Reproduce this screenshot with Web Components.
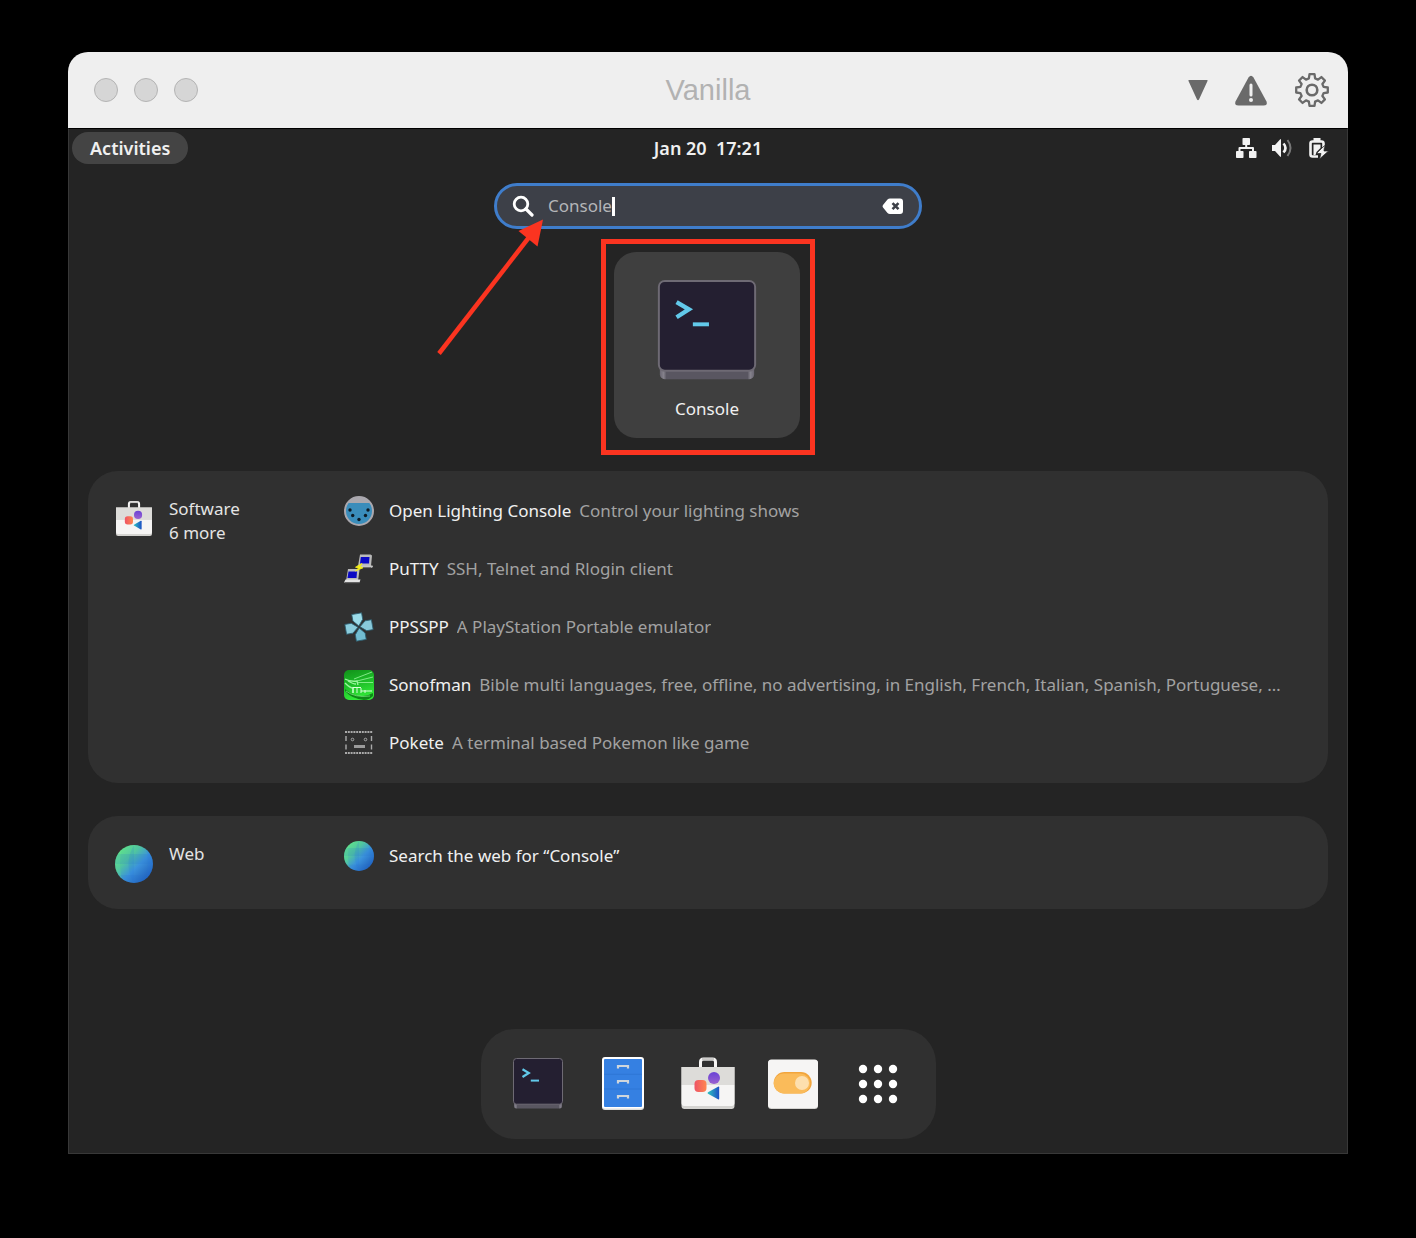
<!DOCTYPE html>
<html lang="en">
<head>
<meta charset="utf-8">
<title>Vanilla</title>
<style>
  html { background: #000; }
  body {
    margin: 0;
    min-height: 100vh;
    box-sizing: border-box;
    padding: 52px 68px 84px;
    display: flex;
    flex-direction: column;
    font: 17px/24px "Noto Sans", "Open Sans", sans-serif;
    color: #f0f0f0;
  }
</style>
</head>
<body>
<vm-window heading="Vanilla">
  <top-bar slot="screen"></top-bar>
  <search-box slot="screen" value="Console"></search-box>
  <app-tile slot="screen" icon="terminal">Console</app-tile>
  <result-panel slot="screen" icon="bag" heading="Software" more="6 more">
    <result-row icon="lighting" name="Open Lighting Console">Control your lighting shows</result-row>
    <result-row icon="putty" name="PuTTY">SSH, Telnet and Rlogin client</result-row>
    <result-row icon="ppsspp" name="PPSSPP">A PlayStation Portable emulator</result-row>
    <result-row icon="sonofman" name="Sonofman">Bible multi languages, free, offline, no advertising, in English, French, Italian, Spanish, Portuguese, …</result-row>
    <result-row icon="pokete" name="Pokete">A terminal based Pokemon like game</result-row>
  </result-panel>
  <result-panel slot="screen" icon="globe" heading="Web">
    <result-row icon="globe" name="Search the web for “Console”"></result-row>
  </result-panel>
  <app-dock slot="screen"></app-dock>
</vm-window>

<script>
const RESET = `
  :host, *, *::before { box-sizing: border-box; }
  button { font: inherit; color: inherit; background: none; border: 0; padding: 0; margin: 0; cursor: pointer; }
  a { color: inherit; text-decoration: none; }
`;

// Outline of an eight-toothed cog centred on (18,18).
function gearPath() {
  const pts = [];
  for (let i = 0; i < 8; i++) {
    for (const [off, r] of [[-15, 12], [-9, 16], [9, 16], [15, 12]]) {
      const a = (i * 45 + off - 90) * Math.PI / 180;
      pts.push((18 + r * Math.cos(a)).toFixed(2) + ' ' + (18 + r * Math.sin(a)).toFixed(2));
    }
  }
  return 'M' + pts.join('L') + 'Z';
}

const ICONS = {
  caret: ['0 0 20 22', '<path d="M1 1h18q1 0 .5 1L11 20.500q-1 1.500-2 0L.5 2Q0 1 1 1z" fill="#6a6a6a"/>'],
  warning: ['0 0 34 32', '<path d="M14.500 3.500q2.500-3.500 5 0l13 24q1.500 4-3 4h-25q-4.500 0-3-4z" fill="#6a6a6a"/><path d="M17 11v10" stroke="#efefef" stroke-width="3" stroke-linecap="round"/><circle cx="17" cy="26" r="2" fill="#efefef"/>'],
  gear: ['0 0 36 36', `<g fill="none" stroke="#6a6a6a" stroke-width="2.300" stroke-linejoin="round"><path d="${gearPath()}"/><circle cx="18" cy="18" r="5.300" stroke-width="2.600"/></g>`],
  network: ['0 0 22 22', '<g fill="#f2f2f2"><rect x="7.500" y="1" width="7.500" height="7" rx=".8"/><rect x="1" y="14" width="7.500" height="7" rx=".8"/><rect x="14" y="14" width="7.500" height="7" rx=".8"/></g><path d="M11.200 7v4.500M4.500 15v-4h13.500v4" fill="none" stroke="#f2f2f2" stroke-width="2" stroke-linejoin="round"/>'],
  volume: ['0 0 22 22', '<path fill="#f2f2f2" d="M1 8h3l5-5.500q1-1 1 .5v16q0 1.500-1 .5L4 14H1z"/><path d="M12.500 6.500q4 4.500 0 9" fill="none" stroke="#f2f2f2" stroke-width="2.600"/><path d="M16.500 3q6 8 0 16" fill="none" stroke="#777" stroke-width="2"/>'],
  battery: ['0 0 22 22', '<path fill="none" stroke="#f2f2f2" stroke-width="2.600" stroke-linejoin="round" d="M11 19.500H5.500q-2 0-2-2V6.500q0-2 2-2h9q2 0 2 2v4"/><path fill="#f2f2f2" d="M6.500 1h7v3.500h-7zM6.500 7.500h7V11l-4 4-1 3h-2z"/><path fill="#f2f2f2" d="M17.500 8.500l-8 8H14l-1.500 5.500 9-8H17z" stroke="#242424" stroke-width=".7"/>'],
  search: ['0 0 22 22', '<circle cx="9" cy="9" r="6.800" fill="none" stroke="#fff" stroke-width="2.800"/><path d="M14 14l6 6" stroke="#fff" stroke-width="3.200" stroke-linecap="round"/>'],
  erase: ['0 0 22 18', '<path fill="#fff" d="M8 1.500h10q3 0 3 3v9.500q0 3-3 3H8q-1.500 0-2.500-1L1 10.500q-1-1.200 0-2.500L5.500 2.500q1-1 2.500-1z"/><path d="M10.500 6.200l6 6M16.500 6.200l-6 6" stroke="#3d4048" stroke-width="2.600"/>'],
  terminal: ['0 0 56 56', `
    <defs><linearGradient id="t"><stop offset="0" stop-color="#6a6672"/><stop offset=".04" stop-color="#85828c"/><stop offset=".07" stop-color="#595661"/><stop offset=".93" stop-color="#595661"/><stop offset=".96" stop-color="#85828c"/><stop offset="1" stop-color="#6a6672"/></linearGradient></defs>
    <rect x="4" y="10" width="48" height="42.500" rx="2.500" fill="url(#t)"/>
    <rect x="3.500" y="2.500" width="49" height="45.700" rx="3" fill="#241f31" stroke="#6e6a74" stroke-width="1"/>
    <path d="M12.500 13.300l6.300 3.700-6.300 4" fill="none" stroke="#62c9ea" stroke-width="2.200"/>
    <path d="M20.800 24.600h8.200" stroke="#62c9ea" stroke-width="2"/>`],
  files: ['0 0 56 56', `
    <rect x="7" y="5" width="42" height="49" rx="3" fill="#deddda"/>
    <rect x="7" y="1" width="42" height="51.500" rx="3" fill="#fff"/>
    <rect x="9" y="3" width="38" height="48" rx="1" fill="#3580e2"/>
    <path d="M9 18.300h38M9 33h38" stroke="#2f76d6"/>
    <path d="M23 12.500V10h10v2.500M23 27.500V25h10v2.500M23 42.500V40h10v2.500" fill="none" stroke="#cfd6dc" stroke-width="2.200"/>`],
  bag: ['0 0 56 56', `
    <defs><linearGradient id="r"><stop offset="0" stop-color="#ee5465"/><stop offset="1" stop-color="#ff8650"/></linearGradient>
    <linearGradient id="p" x2="0" y2="1"><stop offset="0" stop-color="#6a43d6"/><stop offset="1" stop-color="#9a62d0"/></linearGradient>
    <linearGradient id="b"><stop offset="0" stop-color="#2fc4c0"/><stop offset="1" stop-color="#1c4fc4"/></linearGradient></defs>
    <path d="M20.500 12V6q0-3 3-3h9q3 0 3 3v6" fill="none" stroke="#f6f5f4" stroke-width="3"/>
    <path d="M22 3.300h12" stroke="#c9c8c6" stroke-width="2.400"/>
    <path d="M1.500 11h53v39q0 3-3 3h-47q-3 0-3-3z" fill="#d5d4d1"/>
    <path d="M1.500 29q26-1 53 0v18q0 3-3 3h-47q-3 0-3-3z" fill="#f6f5f4"/>
    <path d="M1.500 11h53v18h-53z" fill="#dddcd9"/>
    <rect x="14.500" y="24" width="12" height="12" rx="4" fill="url(#r)"/>
    <circle cx="34" cy="22" r="6" fill="url(#p)"/>
    <path d="M28 36.300l10-5.600q1.200-.5 1.200.8v11q0 1.300-1.200.8l-10-5.600q-1-.7 0-1.400z" fill="url(#b)"/>`],
  toggle: ['0 0 56 56', `
    <rect x="3" y="4" width="50" height="49" rx="3.500" fill="#d5d4d1"/>
    <rect x="3" y="3.500" width="50" height="48.500" rx="3.500" fill="#f6f5f4"/>
    <rect x="8.700" y="16" width="38" height="21.500" rx="10.700" fill="#f2a53c"/>
    <rect x="8.700" y="17.500" width="36.500" height="20" rx="10" fill="#fabb5a"/>
    <circle cx="37" cy="27" r="7" fill="#fddfae"/>`],
  grid: ['0 0 56 56', [13, 28, 43].map(y => [13, 28, 43].map(x => `<circle cx="${x}" cy="${y}" r="4.200" fill="#fff"/>`).join('')).join('')],
  globe: ['0 0 38 38', `
    <defs><linearGradient id="g" x1=".1" y1=".15" x2=".85" y2=".9"><stop offset="0" stop-color="#5fe08c"/><stop offset=".3" stop-color="#50c5a0"/><stop offset=".6" stop-color="#3b92dc"/><stop offset="1" stop-color="#1f5fbb"/></linearGradient>
    <clipPath id="c"><circle cx="19" cy="19" r="19"/></clipPath></defs>
    <g clip-path="url(#c)"><rect width="38" height="38" fill="url(#g)"/>
    <path d="M0 9h38v10H0zM0 30h38v8H0z" fill="#246fd0" opacity=".16"/>
    <path d="M19 0v38q-11-19 0-38M30 0q6 19 0 38h8V0z" fill="#2378e0" opacity=".16"/>
    <path d="M8 0q-6 19 0 38H0V0z" fill="#6af08a" opacity=".2"/></g>`],
  lighting: ['0 0 30 30', `
    <circle cx="15" cy="15" r="14" fill="#3a8dbb" stroke="#aaa8ae" stroke-width="2"/>
    <path d="M3 7Q7 1 15 1t12 6z" fill="#aaa8ae"/>
    <g fill="#0d1a24"><circle cx="6" cy="14" r="1.700"/><circle cx="24" cy="14" r="1.700"/><circle cx="8.700" cy="19.500" r="1.700"/><circle cx="21.500" cy="19.500" r="1.700"/><circle cx="15" cy="23.500" r="1.700"/></g>`],
  putty: ['0 0 30 30', `
    <path d="M16 .5h10.500l1.500 1-1 10.500H14z" fill="#b9b9b9"/><path d="M16.800 3h8.700L25 9.500h-9z" fill="#0a08c4"/><path d="M13.500 11.500h15l.5 1.500-2 1H14z" fill="#c6c6c6"/><path d="M16 13.800h11" stroke="#444"/>
    <path d="M4 15h10.500l1 1L14 27H2z" fill="#b9b9b9"/><path d="M4.500 17.500H13l-.5 6.500h-9z" fill="#0a08c4"/><path d="M1.500 25.500h15l-1 3H0z" fill="#e4e4e4"/><path d="M1 28.800h14.500" stroke="#555"/>
    <path d="M18 9.500l-6.500 3.700 3 1-3 2.800 7.500-3.200-2.800-1.200z" fill="#f4ee19" stroke="#f4ee19" stroke-width=".8"/>`],
  ppsspp: ['0 0 30 30', `
    <g transform="rotate(-10 15 15)" stroke="#2d5c6e" stroke-width=".8">
    <path d="M10 1.500h10v6.500l-5 6L10 8z" fill="#9bdbe8"/><path d="M28.500 10v10h-6.500L16 15l6-5z" fill="#88c9da"/>
    <path d="M20 28.500H10v-6.500l5-6 5 6z" fill="#72bdd2"/><path d="M1.500 20V10h6.500l6 5-6 5z" fill="#8accdc"/></g>`],
  sonofman: ['0 0 30 30', `
    <defs><linearGradient id="s" x2=".3" y2="1"><stop offset="0" stop-color="#12901a"/><stop offset=".5" stop-color="#1cba27"/><stop offset="1" stop-color="#32e838"/></linearGradient></defs>
    <rect width="30" height="30" rx="5" fill="url(#s)"/>
    <path d="M1 19q14 12 28 4v3q-4 4-9 4-12-1-19-9z" fill="#0d8a16"/>
    <g fill="none" stroke="#9af59d"><path d="M10 9L28 2M13 11l16-4M13 12.500h16" opacity=".8"/><path d="M1 9q5 3 12 2l1 4M1 13q5 5 8 5v5M4 11q5 3 8 3" stroke-width="1.400"/><path d="M9 17v6M13 17v6M17 18v5M21 20v3M9 17.500h8M17 21h11" stroke="#d8ffd8" stroke-width="1"/><path d="M2 21q9 7 24 5" opacity=".6"/></g>`],
  pokete: ['0 0 30 30', `
    <g stroke="#aaa" fill="none"><path d="M1 4h28M1 25h28" stroke-width="1.800" stroke-dasharray="2 .8"/><path d="M2 8v5M2 16.500v5M27.500 8v5M27.500 16.500v5" stroke-width="1.400"/><circle cx="8.500" cy="11.500" r="1.300"/><circle cx="21.500" cy="11.500" r="1.300"/><path d="M10 18.500h11" stroke-width="3" stroke="#9a9a9a"/></g>`]
};

class VanillaIcon extends HTMLElement {
  connectedCallback() {
    const [box, art] = ICONS[this.getAttribute('name')];
    this.attachShadow({ mode: 'open' }).innerHTML = `
      <style>:host { display: block; flex: none; } svg { display: block; width: 100%; height: 100%; }</style>
      <svg viewBox="${box}" aria-hidden="true">${art}</svg>`;
  }
}
customElements.define('vanilla-icon', VanillaIcon);

class VmWindow extends HTMLElement {
  connectedCallback() {
    this.attachShadow({ mode: 'open' }).innerHTML = `
      <style>${RESET}
        :host { flex: 1; display: flex; flex-direction: column; }
        header {
          height: 76px; padding: 0 18px; background: #efefef; border-radius: 20px 20px 0 0;
          display: grid; grid-template-columns: 1fr auto 1fr; align-items: center;
        }
        .lights { display: flex; gap: 16px; padding-left: 8px; }
        .lights button { width: 24px; height: 24px; border-radius: 50%; background: #d6d6d6; border: 1px solid #b4b4b4; }
        h1 { margin: 0; font: 29px/36px "Liberation Sans", Arial, sans-serif; color: #b2b2b2; }
        .tools { display: flex; justify-content: flex-end; align-items: center; gap: 26px; }
        .caret { width: 20px; height: 22px; }
        .warning { width: 34px; height: 32px; }
        .gear { width: 36px; height: 36px; }
        main {
          flex: 1; display: flex; flex-direction: column; align-items: stretch; background: #242424;
          border: 1px solid #383838; border-top-color: #000;
        }
      </style>
      <header>
        <div class="lights"><button aria-label="Close"></button><button aria-label="Minimize"></button><button aria-label="Zoom"></button></div>
        <h1>${this.getAttribute('heading')}</h1>
        <div class="tools">
          <button aria-label="Menu"><vanilla-icon class="caret" name="caret"></vanilla-icon></button>
          <button aria-label="Warnings"><vanilla-icon class="warning" name="warning"></vanilla-icon></button>
          <button aria-label="Settings"><vanilla-icon class="gear" name="gear"></vanilla-icon></button>
        </div>
      </header>
      <main><slot name="screen"></slot></main>`;
  }
}
customElements.define('vm-window', VmWindow);

class TopBar extends HTMLElement {
  connectedCallback() {
    this.attachShadow({ mode: 'open' }).innerHTML = `
      <style>${RESET}
        :host {
          display: grid; grid-template-columns: 1fr auto 1fr; align-items: center;
          padding: 3px; font-size: 18px; font-weight: 600;
        }
        .activities { justify-self: start; height: 32px; padding: 0 18px; border-radius: 16px; background: #444; }
        time { white-space: pre; }
        .tray { justify-self: end; display: flex; gap: 14px; padding-right: 15px; }
        vanilla-icon { width: 22px; height: 22px; }
      </style>
      <button class="activities">Activities</button>
      <time>Jan 20  17:21</time>
      <button class="tray" aria-label="System menu">
        <vanilla-icon name="network"></vanilla-icon><vanilla-icon name="volume"></vanilla-icon><vanilla-icon name="battery"></vanilla-icon>
      </button>`;
  }
}
customElements.define('top-bar', TopBar);

class SearchBox extends HTMLElement {
  connectedCallback() {
    this.attachShadow({ mode: 'open' }).innerHTML = `
      <style>${RESET}
        :host { display: block; position: relative; align-self: center; width: 428px; max-width: 100%; margin-top: 16px; }
        .field {
          display: flex; align-items: center; height: 46px; padding: 0 15px;
          border: 3px solid #3f7dcb; border-radius: 23px; background: #3d4048;
        }
        label { flex: 1; display: flex; align-items: center; cursor: text; }
        input {
          field-sizing: content; max-width: 320px; margin: 0 0 0 14px; padding: 0; border: 0; outline: 0;
          background: none; font: inherit; color: #b4b5b8; caret-color: transparent;
        }
        .cursor { width: 3px; height: 19px; background: #fff; }
        .find { width: 22px; height: 22px; }
        .erase { width: 22px; height: 18px; }
        .arrow { position: absolute; left: -60px; top: 32px; width: 114px; height: 145px; pointer-events: none; }
      </style>
      <div class="field">
        <label><vanilla-icon class="find" name="search"></vanilla-icon><input type="text" aria-label="Type to search" value="${this.getAttribute('value')}"><span class="cursor"></span></label>
        <button aria-label="Clear"><vanilla-icon class="erase" name="erase"></vanilla-icon></button>
      </div>
      <svg class="arrow" viewBox="0 0 114 145" aria-hidden="true"><path d="M5 138.500L96 21" stroke="#fb3420" stroke-width="4.500"/><path d="M109 4.500L84.500 16 103.500 31.500z" fill="#fb3420"/></svg>`;
  }
}
customElements.define('search-box', SearchBox);

class AppTile extends HTMLElement {
  connectedCallback() {
    this.attachShadow({ mode: 'open' }).innerHTML = `
      <style>${RESET}
        :host { display: block; align-self: center; margin-top: 10px; padding: 8px 10px 12px 8px; border: 5px solid #fb3420; }
        button {
          display: flex; flex-direction: column; align-items: center; gap: 11px;
          width: 186px; padding: 24px 12px 17px; border-radius: 22px; background: #3f3f3f;
        }
        vanilla-icon { width: 110px; height: 110px; }
      </style>
      <button><vanilla-icon name="${this.getAttribute('icon')}"></vanilla-icon><span><slot></slot></span></button>`;
  }
}
customElements.define('app-tile', AppTile);

class ResultPanel extends HTMLElement {
  connectedCallback() {
    const more = this.getAttribute('more');
    this.attachShadow({ mode: 'open' }).innerHTML = `
      <style>${RESET}
        :host {
          display: flex; gap: 12px; min-height: 93px; margin: 16px 19px 17px; padding: 11px 27px;
          border-radius: 30px; background: #303030;
        }
        .source { flex: none; width: 217px; display: flex; align-items: flex-start; gap: 16px; padding-top: 15px; }
        vanilla-icon { width: 38px; height: 38px; margin-top: 3px; }
        .titles { display: flex; flex-direction: column; color: #e4e4e4; }
        .results { flex: 1; min-width: 0; }
      </style>
      <a class="source" href="#"><vanilla-icon name="${this.getAttribute('icon')}"></vanilla-icon><span class="titles"><span>${this.getAttribute('heading')}</span>${more ? `<span>${more}</span>` : ''}</span></a>
      <div class="results"><slot></slot></div>`;
  }
}
customElements.define('result-panel', ResultPanel);

class ResultRow extends HTMLElement {
  connectedCallback() {
    this.attachShadow({ mode: 'open' }).innerHTML = `
      <style>${RESET}
        :host { display: block; }
        a { display: flex; align-items: center; height: 58px; }
        vanilla-icon { width: 30px; height: 30px; margin-right: 15px; }
        .name { flex: none; margin-right: 8px; }
        .about { min-width: 0; color: #a2a2a2; white-space: nowrap; overflow: hidden; text-overflow: ellipsis; }
      </style>
      <a href="#"><vanilla-icon name="${this.getAttribute('icon')}"></vanilla-icon><span class="name">${this.getAttribute('name')}</span><span class="about"><slot></slot></span></a>`;
  }
}
customElements.define('result-row', ResultRow);

class AppDock extends HTMLElement {
  connectedCallback() {
    const apps = [['terminal', 'Console'], ['files', 'Files'], ['bag', 'Software'], ['toggle', 'Tweaks'], ['grid', 'Show Apps']];
    this.attachShadow({ mode: 'open' }).innerHTML = `
      <style>${RESET}
        :host { display: block; align-self: center; margin: auto 0 14px; }
        nav { display: flex; padding: 0 15px; border-radius: 34px; background: #303030; }
        button { width: 85px; height: 110px; display: grid; place-items: center; }
        vanilla-icon { width: 56px; height: 56px; }
      </style>
      <nav aria-label="Dash">${apps.map(([icon, label]) => `<button aria-label="${label}"><vanilla-icon name="${icon}"></vanilla-icon></button>`).join('')}</nav>`;
  }
}
customElements.define('app-dock', AppDock);
</script>
</body>
</html>
